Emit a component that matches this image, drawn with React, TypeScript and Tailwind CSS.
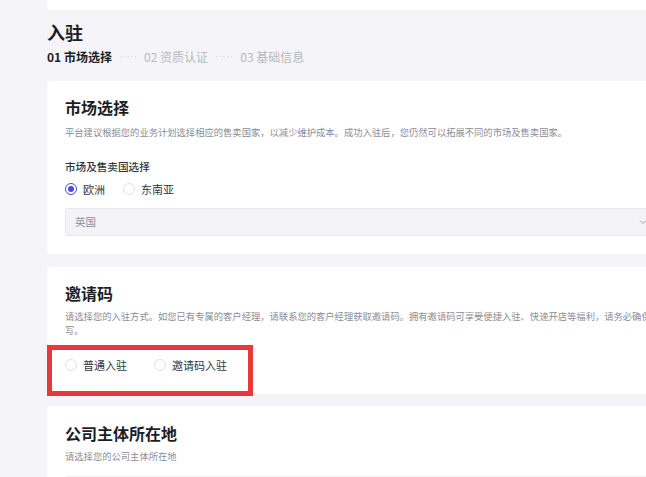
import React, { useState } from 'react';

const font = { fontFamily: '"Noto Sans CJK SC", "Noto Sans", sans-serif' };

interface RadioProps {
  label: string;
  checked: boolean;
  onClick: () => void;
}

const Radio: React.FC<RadioProps> = ({ label, checked, onClick }) => (
  <button onClick={onClick} className="flex items-center gap-[6px]">
    <span
      className={
        checked
          ? 'flex h-[12px] w-[12px] items-center justify-center rounded-full border border-[#4f4bd8] bg-white'
          : 'h-[12px] w-[12px] rounded-full border border-[#e2e2e8] bg-white'
      }
    >
      {checked && <span className="h-[6px] w-[6px] rounded-full bg-[#4f4bd8]" />}
    </span>
    <span className="text-[11px] leading-none text-[#33333d]">{label}</span>
  </button>
);

const Dots = () => (
  <span className="mx-[7px] font-['Liberation_Sans',sans-serif] text-[10px] tracking-[0.3px] text-[#d4d4dc]">
    ·····
  </span>
);

export default function App() {
  const [market, setMarket] = useState('eu');
  const [entry, setEntry] = useState('');

  return (
    <div className="min-h-screen w-full overflow-hidden bg-[#f5f5f9] pl-[47px]" style={font}>
      <div className="h-[10px] w-[640px] rounded-b bg-white" />

      {/* 标题 + 步骤 */}
      <h1 className="mt-[10px] text-[18px] font-bold leading-[24px] text-[#1d1d25]">入驻</h1>
      <div className="mt-[5px] flex items-center text-[12px] leading-[16px]">
        <span className="font-semibold text-[#1d1d25]">01 市场选择</span>
        <Dots />
        <span className="text-[#b8b8c2]">02 资质认证</span>
        <Dots />
        <span className="text-[#b8b8c2]">03 基础信息</span>
      </div>

      {/* 市场选择 */}
      <div className="mt-[16px] h-[173px] w-[640px] rounded bg-white px-[18px] pt-[15px]">
        <h2 className="text-[16px] font-bold leading-[22px] text-[#1d1d25]">市场选择</h2>
        <p className="mt-[7px] text-[9.3px] leading-[14px] text-[#8c8c98]">
          平台建议根据您的业务计划选择相应的售卖国家，以减少维护成本。成功入驻后，您仍然可以拓展不同的市场及售卖国家。
        </p>
        <div className="mt-[21px] text-[10.6px] font-medium leading-[14px] text-[#33333d]">市场及售卖国选择</div>
        <div className="mt-[9px] flex items-center gap-[18px]">
          <Radio label="欧洲" checked={market === 'eu'} onClick={() => setMarket('eu')} />
          <Radio label="东南亚" checked={market === 'sea'} onClick={() => setMarket('sea')} />
        </div>
        <div className="mt-[13px] flex h-[28px] w-[587px] items-center justify-between rounded-[3px] border border-[#e6e6ec] bg-[#f4f4f8] pl-[9px] pr-[4px]">
          <span className="text-[10.5px] text-[#8c8c98]">英国</span>
          <svg width="8" height="8" viewBox="0 0 8 8" fill="none" stroke="#a0a0aa" strokeWidth="1">
            <path d="M1 2.5 L4 5.5 L7 2.5" />
          </svg>
        </div>
      </div>

      {/* 邀请码 */}
      <div className="relative mt-[13px] h-[127px] w-[640px] rounded bg-white px-[18px] pt-[15px]">
        <h2 className="text-[16px] font-bold leading-[22px] text-[#1d1d25]">邀请码</h2>
        <p className="mt-[5px] w-[596px] text-[9.3px] leading-[14px] text-[#8c8c98]">
          请选择您的入驻方式。如您已有专属的客户经理，请联系您的客户经理获取邀请码。拥有邀请码可享受便捷入驻、快速开店等福利，请务必确保填写。
        </p>
        <div className="mt-[22px] flex items-center gap-[27px]">
          <Radio label="普通入驻" checked={entry === 'normal'} onClick={() => setEntry('normal')} />
          <Radio label="邀请码入驻" checked={entry === 'code'} onClick={() => setEntry('code')} />
        </div>
        <div className="pointer-events-none absolute left-0 top-[78px] h-[51px] w-[206px] border-[5px] border-[#e8383b]" />
      </div>

      {/* 公司主体所在地 */}
      <div className="mt-[12px] h-[120px] w-[640px] rounded bg-white px-[18px] pt-[16px]">
        <h2 className="text-[16px] font-bold leading-[22px] text-[#1d1d25]">公司主体所在地</h2>
        <p className="mt-[5px] text-[9.3px] leading-[14px] text-[#8c8c98]">请选择您的公司主体所在地</p>
        <div className="mt-[13px] h-[28px] w-[587px] rounded-[3px] border border-[#f0f0f4]" />
      </div>
    </div>
  );
}
